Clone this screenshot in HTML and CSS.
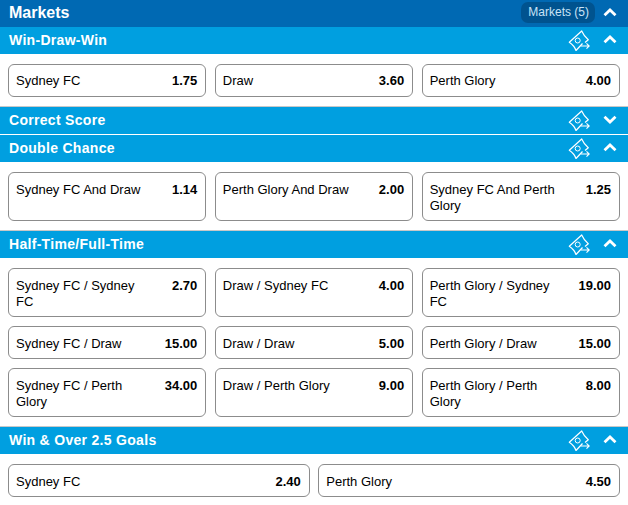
FILE: index.html
```html
<!DOCTYPE html>
<html lang="en">
<head>
<meta charset="utf-8">
<title>Markets</title>
<link rel="stylesheet" href="styles.css">
</head>
<body>
<svg class="defs" width="0" height="0">
  <defs>
    <symbol id="cash" viewBox="0 0 22 21">
      <path d="M14.500 13.500 8 20.500C7 17.500 4.500 14.500 1.300 12.300L13.700 1C15 4 17.500 7.500 20.300 9.700L17 12.500" fill="none" stroke="#fff" stroke-width="1.200" stroke-linejoin="round"/>
      <circle cx="9.700" cy="10.500" r="2.500" fill="none" stroke="#fff" stroke-width="1"/>
      <path d="M12.700 16h8.300M18.500 13.300l2.700 2.700-2.700 2.700" fill="none" stroke="#fff" stroke-width="1.100"/>
    </symbol>
    <symbol id="up" viewBox="0 0 14 9">
      <path d="M1.500 7.200 7 2l5.500 5.200" fill="none" stroke="#fff" stroke-width="2.800"/>
    </symbol>
    <symbol id="down" viewBox="0 0 14 9">
      <path d="M1.500 1.800 7 7l5.500-5.200" fill="none" stroke="#fff" stroke-width="2.800"/>
    </symbol>
  </defs>
</svg>

<header class="top">
  <h1 class="top-title">Markets</h1>
  <span class="pill">Markets (5)</span>
  <svg class="chev"><use href="#up"/></svg>
</header>

<section class="first">
  <div class="head">
    <h2 class="head-title">Win-Draw-Win</h2>
    <svg class="cash"><use href="#cash"/></svg>
    <svg class="chev"><use href="#up"/></svg>
  </div>
  <div class="grid">
    <button class="odd"><span class="name">Sydney FC</span><b class="price">1.75</b></button>
    <button class="odd"><span class="name">Draw</span><b class="price">3.60</b></button>
    <button class="odd"><span class="name">Perth Glory</span><b class="price">4.00</b></button>
  </div>
</section>

<section class="ruled">
  <div class="head">
    <h2 class="head-title">Correct Score</h2>
    <svg class="cash"><use href="#cash"/></svg>
    <svg class="chev"><use href="#down"/></svg>
  </div>
</section>

<section class="lined">
  <div class="head">
    <h2 class="head-title">Double Chance</h2>
    <svg class="cash"><use href="#cash"/></svg>
    <svg class="chev"><use href="#up"/></svg>
  </div>
  <div class="grid">
    <button class="odd tall"><span class="name">Sydney FC And Draw</span><b class="price">1.14</b></button>
    <button class="odd tall"><span class="name">Perth Glory And Draw</span><b class="price">2.00</b></button>
    <button class="odd tall"><span class="name">Sydney FC And Perth Glory</span><b class="price">1.25</b></button>
  </div>
</section>

<section class="ruled">
  <div class="head">
    <h2 class="head-title">Half-Time/Full-Time</h2>
    <svg class="cash"><use href="#cash"/></svg>
    <svg class="chev"><use href="#up"/></svg>
  </div>
  <div class="grid">
    <button class="odd"><span class="name">Sydney FC / Sydney FC</span><b class="price">2.70</b></button>
    <button class="odd"><span class="name">Draw / Sydney FC</span><b class="price">4.00</b></button>
    <button class="odd"><span class="name">Perth Glory / Sydney FC</span><b class="price">19.00</b></button>
    <button class="odd"><span class="name">Sydney FC / Draw</span><b class="price">15.00</b></button>
    <button class="odd"><span class="name">Draw / Draw</span><b class="price">5.00</b></button>
    <button class="odd"><span class="name">Perth Glory / Draw</span><b class="price">15.00</b></button>
    <button class="odd"><span class="name">Sydney FC / Perth Glory</span><b class="price">34.00</b></button>
    <button class="odd"><span class="name">Draw / Perth Glory</span><b class="price">9.00</b></button>
    <button class="odd"><span class="name">Perth Glory / Perth Glory</span><b class="price">8.00</b></button>
  </div>
</section>

<section class="ruled">
  <div class="head">
    <h2 class="head-title">Win &amp; Over 2.5 Goals</h2>
    <svg class="cash"><use href="#cash"/></svg>
    <svg class="chev"><use href="#up"/></svg>
  </div>
  <div class="grid two">
    <button class="odd"><span class="name">Sydney FC</span><b class="price">2.40</b></button>
    <button class="odd"><span class="name">Perth Glory</span><b class="price">4.50</b></button>
  </div>
</section>
</body>
</html>
```

FILE: styles.css
```css
* { box-sizing: border-box; }

html, body {
  margin: 0;
  background: #fff;
  overflow: hidden;
}

body {
  font-family: "Liberation Sans", Arial, sans-serif;
  color: #000;
}

.defs { position: absolute; }

.top {
  display: flex;
  align-items: center;
  height: 27px;
  padding: 0 11px 2px 9px;
  background: #0069b3;
}

.top-title {
  flex: 1;
  margin: 0;
  font-size: 16px;
  font-weight: 700;
  color: #fff;
}

.pill {
  height: 21px;
  margin-right: 8px;
  padding: 0 6px 0 7px;
  border-radius: 7px;
  background: #00538f;
  color: #c9e3f7;
  font-size: 12px;
  line-height: 21px;
}

.head {
  display: flex;
  align-items: center;
  height: 27px;
  padding: 0 11px 2px 9px;
  background: #009fe0;
}

.head-title {
  flex: 1;
  margin: 0;
  font-size: 14px;
  font-weight: 700;
  letter-spacing: .3px;
  color: #fff;
}

.cash {
  width: 22px;
  height: 21px;
  margin-right: 13px;
  margin-top: 2px;
}

.chev {
  width: 14px;
  height: 9px;
}

.ruled { border-top: 1px solid #c8c8c8; }
.lined { border-top: 1px solid #fff; }

.grid {
  display: grid;
  grid-template-columns: repeat(3, 1fr);
  gap: 9px 8.5px;
  padding: 10px 8px 9px;
}

.grid.two { grid-template-columns: repeat(2, 1fr); }

.odd {
  display: flex;
  align-items: flex-start;
  justify-content: space-between;
  min-height: 33px;
  padding: 9px 8px 6px 7px;
  border: 1px solid #8c8c8c;
  border-radius: 6px;
  background: #fff;
  color: #000;
  font: 13px/16px "Liberation Sans", Arial, sans-serif;
  text-align: left;
}

.first .odd { padding-top: 8px; padding-bottom: 7px; }

.tall { min-height: 49px; }

.name { flex: 0 1 138px; }

.price { font-weight: 700; }
```
